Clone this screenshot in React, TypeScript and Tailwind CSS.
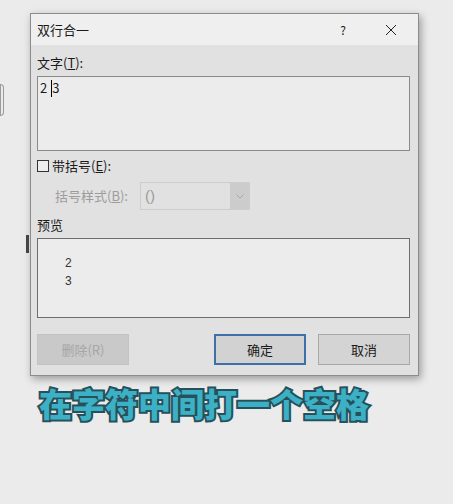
export default function App() {
  return (
    <div className="w-[453px] h-[504px] bg-[#ebebeb] relative overflow-hidden font-['Noto_Sans_CJK_SC',sans-serif] text-[#1a1a1a]">
      {/* faint shapes behind the dialog */}
      <div className="absolute left-0 top-[84px] w-[4px] h-[32px] border border-[#9a9a9a] rounded-r-sm" />
      <div className="absolute left-[26px] top-[235px] w-[3px] h-[18px] bg-[#444]" />

      <div className="pt-[13px] pl-[30px]">
        {/* Dialog */}
        <div className="w-[389px] h-[363px] border border-[#8c8c8c] bg-[#e1e1e1] shadow-[2px_3px_8px_rgba(0,0,0,0.35)] flex flex-col">
          {/* Title bar */}
          <div className="h-[31px] bg-[#efefef] flex items-center pl-[6px] pr-[20px] text-[13px]">
            <span className="flex-1">双行合一</span>
            <span className="w-[20px] text-center text-[12px] mr-[32px]">?</span>
            <svg width="12" height="12" viewBox="0 0 12 12" className="mr-[1px]">
              <path d="M1 1 L11 11 M11 1 L1 11" stroke="#222" strokeWidth="1" />
            </svg>
          </div>

          {/* Body */}
          <div className="flex-1 pl-[6px] pr-[8px] flex flex-col text-[13px]">
            <div className="h-[16px] mt-[10px] leading-[16px]">
              文字(<span className="underline">T</span>):
            </div>
            <div className="mt-[5px] h-[75px] border border-[#8a8a8a] bg-[#ececec] px-[2px] pt-[1px] text-[13px] leading-[20px] flex items-start">
              <span>2</span>
              <span className="ml-[4px] w-px h-[17px] bg-black mt-[2px]" />
              <span>3</span>
            </div>

            <div className="mt-[7px] h-[16px] flex items-center gap-[3px]">
              <span className="w-[12px] h-[12px] border border-[#333] bg-[#ededed]" />
              <span className="leading-[16px]">
                带括号(<span className="underline">E</span>):
              </span>
            </div>

            <div className="mt-[8px] h-[28px] flex items-center">
              <span className="w-[103px] pl-[18px] text-[#9c9c9c]">
                括号样式(<span className="underline">B</span>):
              </span>
              <div className="w-[110px] h-[28px] border border-[#cdcdcd] bg-[#e1e1e1] flex">
                <span className="flex-1 pl-[4px] text-[#9c9c9c] leading-[26px] font-['Liberation_Sans',sans-serif] text-[15px]">()</span>
                <span className="w-[19px] h-full bg-[#cccccc] flex items-center justify-center">
                  <svg width="8" height="5" viewBox="0 0 8 5">
                    <path d="M0.5 0.5 L4 4 L7.5 0.5" fill="none" stroke="#a8a8a8" strokeWidth="1" />
                  </svg>
                </span>
              </div>
            </div>

            <div className="mt-[7px] h-[16px] leading-[16px]">预览</div>
            <div className="mt-[5px] h-[80px] border border-[#6e6e6e] bg-[#ececec] pl-[27px] pt-[15px] text-[12px] leading-[18px] font-['Liberation_Sans',sans-serif] text-[#333]">
              <div>2</div>
              <div>3</div>
            </div>

            <div className="mt-[16px] h-[31px] flex items-stretch text-[13px]">
              <div className="w-[92px] bg-[#c9c9c9] border border-[#c3c3c3] flex items-center justify-center text-[#a6a6a6]">
                删除(R)
              </div>
              <div className="flex-1" />
              <div className="w-[92px] bg-[#d2d2d2] border-2 border-[#3d6fa8] flex items-center justify-center">
                确定
              </div>
              <div className="w-[92px] ml-[12px] bg-[#d4d4d4] border border-[#a8a8a8] flex items-center justify-center">
                取消
              </div>
            </div>
          </div>
        </div>

        {/* Caption */}
        <div className="mt-[7px] ml-[9px] h-[40px] text-[33px] leading-[40px] font-black tracking-[0px] text-[#3cb0c4] [-webkit-text-stroke:4px_#27505a] [paint-order:stroke_fill] font-['Noto_Sans_CJK_SC',sans-serif]">
          在字符中间打一个空格
        </div>
      </div>
    </div>
  );
}
